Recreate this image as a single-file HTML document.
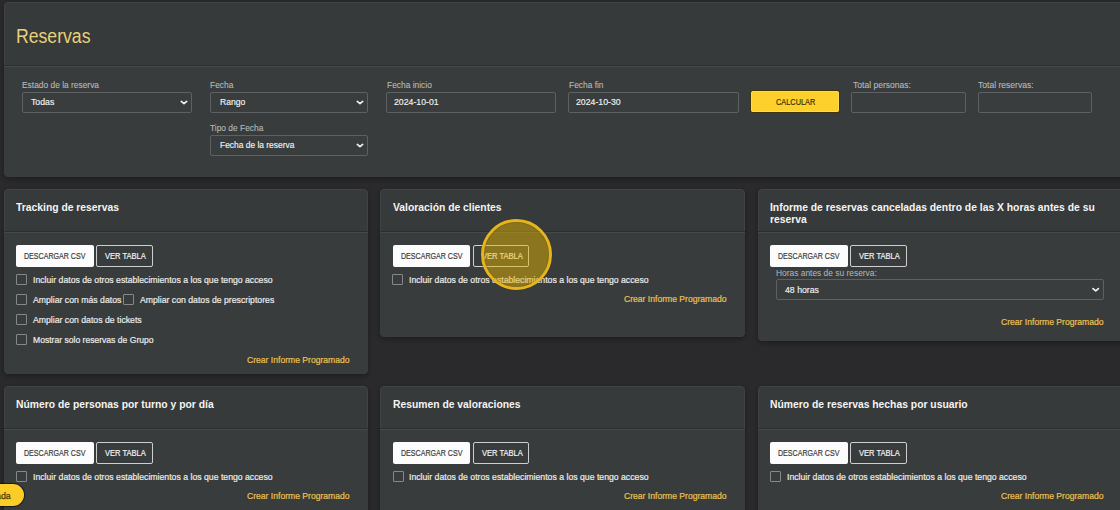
<!DOCTYPE html>
<html><head><meta charset="utf-8">
<style>
*{box-sizing:border-box;margin:0;padding:0}
html,body{width:1120px;height:510px;overflow:hidden;background:#2a2a2c;font-family:"Liberation Sans",sans-serif;position:relative}
.abs{position:absolute}
.t{position:absolute;white-space:nowrap;line-height:1;transform-origin:0 0}
</style></head><body>
<div class="abs" style="left:4px;top:2px;width:1130px;height:174.7px;background:#363a3b;border-radius:4.5px;box-shadow:0 2px 5px rgba(0,0,0,.32), inset 0 0 0 1px rgba(255,255,255,.05)"></div>
<div class="abs" style="left:4px;top:65px;width:1130px;height:1px;background:#2c2f30"></div>
<div class="abs" style="left:4px;top:66px;width:1130px;height:1px;background:#45494a"></div>
<div class="abs" style="left:4px;top:67px;width:1130px;height:109.7px;background:#393c3d;border-radius:0 0 4.5px 4.5px"></div>
<div class="t" style="left:15.8px;top:27.2px;font-size:19.6px;color:#e8d07a;font-weight:normal;transform:scaleX(0.9);">Reservas</div>
<div class="t" style="left:22px;top:81px;font-size:9px;color:#b6b9ba;font-weight:normal;transform:scaleX(0.933);-webkit-text-stroke:0.1px #b6b9ba">Estado de la reserva</div>
<div class="abs" style="left:22px;top:92px;width:170px;height:21px;border:1px solid #5d6163;border-radius:2px;background:#393d3e"></div>
<div class="t" style="left:31px;top:98px;font-size:9px;color:#f2f2f2;font-weight:normal;transform:scaleX(0.97);-webkit-text-stroke:0.15px #f2f2f2">Todas</div>
<div class="t" style="left:210px;top:81px;font-size:9px;color:#b6b9ba;font-weight:normal;transform:scaleX(0.933);-webkit-text-stroke:0.1px #b6b9ba">Fecha</div>
<div class="abs" style="left:210px;top:92px;width:158px;height:21px;border:1px solid #5d6163;border-radius:2px;background:#393d3e"></div>
<div class="t" style="left:219.5px;top:98px;font-size:9px;color:#f2f2f2;font-weight:normal;transform:scaleX(0.95);-webkit-text-stroke:0.15px #f2f2f2">Rango</div>
<div class="t" style="left:210px;top:124px;font-size:9px;color:#b6b9ba;font-weight:normal;transform:scaleX(0.933);-webkit-text-stroke:0.1px #b6b9ba">Tipo de Fecha</div>
<div class="abs" style="left:210px;top:135px;width:158px;height:21px;border:1px solid #5d6163;border-radius:2px;background:#393d3e"></div>
<div class="t" style="left:219.5px;top:141px;font-size:9px;color:#f2f2f2;font-weight:normal;transform:scaleX(0.935);-webkit-text-stroke:0.15px #f2f2f2">Fecha de la reserva</div>
<div class="t" style="left:386.5px;top:81px;font-size:9px;color:#b6b9ba;font-weight:normal;transform:scaleX(0.933);-webkit-text-stroke:0.1px #b6b9ba">Fecha inicio</div>
<div class="abs" style="left:386.3px;top:92.2px;width:170px;height:20.4px;border:1px solid #5d6163;border-radius:2px;background:#393d3e"></div>
<div class="t" style="left:393.7px;top:98px;font-size:9px;color:#f2f2f2;font-weight:normal;transform:scaleX(0.97);-webkit-text-stroke:0.15px #f2f2f2">2024-10-01</div>
<div class="t" style="left:569px;top:81px;font-size:9px;color:#b6b9ba;font-weight:normal;transform:scaleX(0.933);-webkit-text-stroke:0.1px #b6b9ba">Fecha fin</div>
<div class="abs" style="left:568.4px;top:92.2px;width:170.5px;height:20.4px;border:1px solid #5d6163;border-radius:2px;background:#393d3e"></div>
<div class="t" style="left:575.7px;top:98px;font-size:9px;color:#f2f2f2;font-weight:normal;transform:scaleX(0.97);-webkit-text-stroke:0.15px #f2f2f2">2024-10-30</div>
<div class="abs" style="left:751.3px;top:91.3px;width:87.7px;height:21px;background:#fdd02c;border-radius:2.5px;box-shadow:0 0 0 1px #3f3508, inset 0 0 0 1px #fddb55"></div>
<div class="t" style="left:775.7px;top:98px;font-size:9px;color:#3b3006;font-weight:normal;transform:scaleX(0.8184835665473478);-webkit-text-stroke:0.2px #3b3006">CALCULAR</div>
<div class="t" style="left:852.5px;top:81px;font-size:9px;color:#b6b9ba;font-weight:normal;transform:scaleX(0.95);-webkit-text-stroke:0.1px #b6b9ba">Total personas:</div>
<div class="abs" style="left:851px;top:92.2px;width:115px;height:20.6px;border:1px solid #5d6163;border-radius:2px;background:#393d3e"></div>
<div class="t" style="left:978px;top:81px;font-size:9px;color:#b6b9ba;font-weight:normal;transform:scaleX(0.95);-webkit-text-stroke:0.1px #b6b9ba">Total reservas:</div>
<div class="abs" style="left:977.5px;top:92.2px;width:114px;height:20.6px;border:1px solid #5d6163;border-radius:2px;background:#393d3e"></div>
<div class="abs" style="left:4px;top:189px;width:364px;height:184.5px;background:#363a3b;border-radius:4.5px;box-shadow:0 2px 5px rgba(0,0,0,.32), inset 0 0 0 1px rgba(255,255,255,.05)"></div>
<div class="abs" style="left:4px;top:231px;width:364px;height:1px;background:#2c2f30"></div>
<div class="abs" style="left:4px;top:232px;width:364px;height:1px;background:#45494a"></div>
<div class="abs" style="left:4px;top:233px;width:364px;height:140.5px;background:#393c3d;border-radius:0 0 4.5px 4.5px"></div>
<div class="abs" style="left:380.4px;top:189px;width:364.5px;height:147.5px;background:#363a3b;border-radius:4.5px;box-shadow:0 2px 5px rgba(0,0,0,.32), inset 0 0 0 1px rgba(255,255,255,.05)"></div>
<div class="abs" style="left:380.4px;top:231px;width:364.5px;height:1px;background:#2c2f30"></div>
<div class="abs" style="left:380.4px;top:232px;width:364.5px;height:1px;background:#45494a"></div>
<div class="abs" style="left:380.4px;top:233px;width:364.5px;height:103.5px;background:#393c3d;border-radius:0 0 4.5px 4.5px"></div>
<div class="abs" style="left:757.5px;top:189px;width:380px;height:151.6px;background:#363a3b;border-radius:4.5px;box-shadow:0 2px 5px rgba(0,0,0,.32), inset 0 0 0 1px rgba(255,255,255,.05)"></div>
<div class="abs" style="left:757.5px;top:231px;width:380px;height:1px;background:#2c2f30"></div>
<div class="abs" style="left:757.5px;top:232px;width:380px;height:1px;background:#45494a"></div>
<div class="abs" style="left:757.5px;top:233px;width:380px;height:107.6px;background:#393c3d;border-radius:0 0 4.5px 4.5px"></div>
<div class="abs" style="left:4px;top:386.4px;width:364px;height:140px;background:#363a3b;border-radius:4.5px;box-shadow:0 2px 5px rgba(0,0,0,.32), inset 0 0 0 1px rgba(255,255,255,.05)"></div>
<div class="abs" style="left:4px;top:428.4px;width:364px;height:1px;background:#2c2f30"></div>
<div class="abs" style="left:4px;top:429.4px;width:364px;height:1px;background:#45494a"></div>
<div class="abs" style="left:4px;top:430.4px;width:364px;height:96px;background:#393c3d;border-radius:0 0 4.5px 4.5px"></div>
<div class="abs" style="left:380.4px;top:386.4px;width:364.5px;height:140px;background:#363a3b;border-radius:4.5px;box-shadow:0 2px 5px rgba(0,0,0,.32), inset 0 0 0 1px rgba(255,255,255,.05)"></div>
<div class="abs" style="left:380.4px;top:428.4px;width:364.5px;height:1px;background:#2c2f30"></div>
<div class="abs" style="left:380.4px;top:429.4px;width:364.5px;height:1px;background:#45494a"></div>
<div class="abs" style="left:380.4px;top:430.4px;width:364.5px;height:96px;background:#393c3d;border-radius:0 0 4.5px 4.5px"></div>
<div class="abs" style="left:757.5px;top:386.4px;width:380px;height:140px;background:#363a3b;border-radius:4.5px;box-shadow:0 2px 5px rgba(0,0,0,.32), inset 0 0 0 1px rgba(255,255,255,.05)"></div>
<div class="abs" style="left:757.5px;top:428.4px;width:380px;height:1px;background:#2c2f30"></div>
<div class="abs" style="left:757.5px;top:429.4px;width:380px;height:1px;background:#45494a"></div>
<div class="abs" style="left:757.5px;top:430.4px;width:380px;height:96px;background:#393c3d;border-radius:0 0 4.5px 4.5px"></div>
<div class="t" style="left:16px;top:202px;font-size:11px;color:#f4f4f4;font-weight:bold;transform:scaleX(0.94);">Tracking de reservas</div>
<div class="abs" style="left:16px;top:245px;width:77.6px;height:21.7px;background:#fcfcfc;border-radius:2px"></div>
<div class="t" style="left:24.4px;top:252px;font-size:9px;color:#3c3c3c;font-weight:normal;transform:scaleX(0.7869903068172714);-webkit-text-stroke:0.2px #3c3c3c">DESCARGAR CSV</div>
<div class="abs" style="left:96.2px;top:245px;width:56.5px;height:21.7px;border:1px solid #cfcfcf;border-radius:2px"></div>
<div class="t" style="left:105px;top:252px;font-size:9px;color:#f4f4f4;font-weight:normal;transform:scaleX(0.837997432605905);-webkit-text-stroke:0.2px #f4f4f4">VER TABLA</div>
<div class="abs" style="left:16.2px;top:274.3px;width:11px;height:11px;border:1px solid #85898a;border-radius:1px"></div>
<div class="t" style="left:32.6px;top:275.4px;font-size:9.4px;color:#ececec;font-weight:normal;transform:scaleX(0.9268085106382978);-webkit-text-stroke:0.2px #ececec">Incluir datos de otros establecimientos a los que tengo acceso</div>
<div class="abs" style="left:16.2px;top:294.2px;width:11px;height:11px;border:1px solid #85898a;border-radius:1px"></div>
<div class="t" style="left:32.6px;top:295.4px;font-size:9.4px;color:#ececec;font-weight:normal;transform:scaleX(0.9268085106382978);-webkit-text-stroke:0.2px #ececec">Ampliar con más datos</div>
<div class="abs" style="left:123.2px;top:294.2px;width:11px;height:11px;border:1px solid #85898a;border-radius:1px"></div>
<div class="t" style="left:139.7px;top:295.4px;font-size:9.4px;color:#ececec;font-weight:normal;transform:scaleX(0.9268085106382978);-webkit-text-stroke:0.2px #ececec">Ampliar con datos de prescriptores</div>
<div class="abs" style="left:16.2px;top:314.2px;width:11px;height:11px;border:1px solid #85898a;border-radius:1px"></div>
<div class="t" style="left:32.6px;top:315.4px;font-size:9.4px;color:#ececec;font-weight:normal;transform:scaleX(0.9268085106382978);-webkit-text-stroke:0.2px #ececec">Ampliar con datos de tickets</div>
<div class="abs" style="left:16.2px;top:334.2px;width:11px;height:11px;border:1px solid #85898a;border-radius:1px"></div>
<div class="t" style="left:32.6px;top:335.4px;font-size:9.4px;color:#ececec;font-weight:normal;transform:scaleX(0.9143617021276594);-webkit-text-stroke:0.2px #ececec">Mostrar solo reservas de Grupo</div>
<div class="t" style="left:247.41px;top:356px;font-size:9px;color:#ecc14f;font-weight:normal;transform:scaleX(0.954);-webkit-text-stroke:0.2px #ecc14f">Crear Informe Programado</div>
<div class="t" style="left:392.5px;top:202px;font-size:11px;color:#f4f4f4;font-weight:bold;transform:scaleX(0.94);">Valoración de clientes</div>
<div class="abs" style="left:392.5px;top:245px;width:77.6px;height:21.7px;background:#fcfcfc;border-radius:2px"></div>
<div class="t" style="left:400.9px;top:252px;font-size:9px;color:#3c3c3c;font-weight:normal;transform:scaleX(0.7869903068172714);-webkit-text-stroke:0.2px #3c3c3c">DESCARGAR CSV</div>
<div class="abs" style="left:472.7px;top:245px;width:56.5px;height:21.7px;border:1px solid #cfcfcf;border-radius:2px"></div>
<div class="t" style="left:481.5px;top:252px;font-size:9px;color:#f4f4f4;font-weight:normal;transform:scaleX(0.837997432605905);-webkit-text-stroke:0.2px #f4f4f4">VER TABLA</div>
<div class="abs" style="left:392.2px;top:274.3px;width:11px;height:11px;border:1px solid #85898a;border-radius:1px"></div>
<div class="t" style="left:409.3px;top:275.4px;font-size:9.4px;color:#ececec;font-weight:normal;transform:scaleX(0.9268085106382978);-webkit-text-stroke:0.2px #ececec">Incluir datos de otros establecimientos a los que tengo acceso</div>
<div class="t" style="left:624.41px;top:295px;font-size:9px;color:#ecc14f;font-weight:normal;transform:scaleX(0.954);-webkit-text-stroke:0.2px #ecc14f">Crear Informe Programado</div>
<div class="t" style="left:770px;top:202px;font-size:11px;color:#f4f4f4;font-weight:bold;transform:scaleX(0.94);">Informe de reservas canceladas dentro de las X horas antes de su</div>
<div class="t" style="left:770px;top:214px;font-size:11px;color:#f4f4f4;font-weight:bold;transform:scaleX(0.94);">reserva</div>
<div class="abs" style="left:770px;top:245px;width:77.6px;height:21.7px;background:#fcfcfc;border-radius:2px"></div>
<div class="t" style="left:778.4px;top:252px;font-size:9px;color:#3c3c3c;font-weight:normal;transform:scaleX(0.7869903068172714);-webkit-text-stroke:0.2px #3c3c3c">DESCARGAR CSV</div>
<div class="abs" style="left:850.2px;top:245px;width:56.5px;height:21.7px;border:1px solid #cfcfcf;border-radius:2px"></div>
<div class="t" style="left:859px;top:252px;font-size:9px;color:#f4f4f4;font-weight:normal;transform:scaleX(0.837997432605905);-webkit-text-stroke:0.2px #f4f4f4">VER TABLA</div>
<div class="t" style="left:776px;top:268.5px;font-size:9px;color:#b6b9ba;font-weight:normal;transform:scaleX(0.933);">Horas antes de su reserva:</div>
<div class="abs" style="left:776px;top:279.2px;width:327.5px;height:21.2px;border:1px solid #5d6163;border-radius:2px;background:#393d3e"></div>
<div class="t" style="left:785px;top:286px;font-size:9px;color:#f2f2f2;font-weight:normal;transform:scaleX(0.97);-webkit-text-stroke:0.15px #f2f2f2">48 horas</div>
<div class="t" style="left:1000.61px;top:318px;font-size:9px;color:#ecc14f;font-weight:normal;transform:scaleX(0.954);-webkit-text-stroke:0.2px #ecc14f">Crear Informe Programado</div>
<div class="t" style="left:16px;top:399px;font-size:11px;color:#f4f4f4;font-weight:bold;transform:scaleX(0.94);">Número de personas por turno y por día</div>
<div class="abs" style="left:16px;top:442px;width:77.6px;height:21.7px;background:#fcfcfc;border-radius:2px"></div>
<div class="t" style="left:24.4px;top:449px;font-size:9px;color:#3c3c3c;font-weight:normal;transform:scaleX(0.7869903068172714);-webkit-text-stroke:0.2px #3c3c3c">DESCARGAR CSV</div>
<div class="abs" style="left:96.2px;top:442px;width:56.5px;height:21.7px;border:1px solid #cfcfcf;border-radius:2px"></div>
<div class="t" style="left:105px;top:449px;font-size:9px;color:#f4f4f4;font-weight:normal;transform:scaleX(0.837997432605905);-webkit-text-stroke:0.2px #f4f4f4">VER TABLA</div>
<div class="abs" style="left:16.2px;top:471px;width:11px;height:11px;border:1px solid #85898a;border-radius:1px"></div>
<div class="t" style="left:32.6px;top:471.9px;font-size:9.4px;color:#ececec;font-weight:normal;transform:scaleX(0.9268085106382978);-webkit-text-stroke:0.2px #ececec">Incluir datos de otros establecimientos a los que tengo acceso</div>
<div class="t" style="left:247.41px;top:492px;font-size:9px;color:#ecc14f;font-weight:normal;transform:scaleX(0.954);-webkit-text-stroke:0.2px #ecc14f">Crear Informe Programado</div>
<div class="t" style="left:392.5px;top:399px;font-size:11px;color:#f4f4f4;font-weight:bold;transform:scaleX(0.94);">Resumen de valoraciones</div>
<div class="abs" style="left:392.5px;top:442px;width:77.6px;height:21.7px;background:#fcfcfc;border-radius:2px"></div>
<div class="t" style="left:400.9px;top:449px;font-size:9px;color:#3c3c3c;font-weight:normal;transform:scaleX(0.7869903068172714);-webkit-text-stroke:0.2px #3c3c3c">DESCARGAR CSV</div>
<div class="abs" style="left:472.7px;top:442px;width:56.5px;height:21.7px;border:1px solid #cfcfcf;border-radius:2px"></div>
<div class="t" style="left:481.5px;top:449px;font-size:9px;color:#f4f4f4;font-weight:normal;transform:scaleX(0.837997432605905);-webkit-text-stroke:0.2px #f4f4f4">VER TABLA</div>
<div class="abs" style="left:392.7px;top:471px;width:11px;height:11px;border:1px solid #85898a;border-radius:1px"></div>
<div class="t" style="left:409.1px;top:471.9px;font-size:9.4px;color:#ececec;font-weight:normal;transform:scaleX(0.9268085106382978);-webkit-text-stroke:0.2px #ececec">Incluir datos de otros establecimientos a los que tengo acceso</div>
<div class="t" style="left:624.41px;top:492px;font-size:9px;color:#ecc14f;font-weight:normal;transform:scaleX(0.954);-webkit-text-stroke:0.2px #ecc14f">Crear Informe Programado</div>
<div class="t" style="left:770px;top:399px;font-size:11px;color:#f4f4f4;font-weight:bold;transform:scaleX(0.94);">Número de reservas hechas por usuario</div>
<div class="abs" style="left:770px;top:442px;width:77.6px;height:21.7px;background:#fcfcfc;border-radius:2px"></div>
<div class="t" style="left:778.4px;top:449px;font-size:9px;color:#3c3c3c;font-weight:normal;transform:scaleX(0.7869903068172714);-webkit-text-stroke:0.2px #3c3c3c">DESCARGAR CSV</div>
<div class="abs" style="left:850.2px;top:442px;width:56.5px;height:21.7px;border:1px solid #cfcfcf;border-radius:2px"></div>
<div class="t" style="left:859px;top:449px;font-size:9px;color:#f4f4f4;font-weight:normal;transform:scaleX(0.837997432605905);-webkit-text-stroke:0.2px #f4f4f4">VER TABLA</div>
<div class="abs" style="left:770.2px;top:471px;width:11px;height:11px;border:1px solid #85898a;border-radius:1px"></div>
<div class="t" style="left:786.6px;top:471.9px;font-size:9.4px;color:#ececec;font-weight:normal;transform:scaleX(0.9268085106382978);-webkit-text-stroke:0.2px #ececec">Incluir datos de otros establecimientos a los que tengo acceso</div>
<div class="t" style="left:1000.61px;top:492px;font-size:9px;color:#ecc14f;font-weight:normal;transform:scaleX(0.954);-webkit-text-stroke:0.2px #ecc14f">Crear Informe Programado</div>
<svg class="abs" style="left:0;top:0" width="1120" height="510"><g fill="none" stroke="#f4f4f4" stroke-width="1.6" stroke-linecap="round" stroke-linejoin="round">
<path d="M181.3 101.4 L184 103.7 L186.7 101.4"/>
<path d="M357.3 101.4 L360 103.7 L362.7 101.4"/>
<path d="M357.3 144.4 L360 146.7 L362.7 144.4"/>
<path d="M1093 288.6 L1095.7 290.9 L1098.4 288.6"/>
</g></svg>
<div class="abs" style="left:481px;top:219.2px;width:71px;height:71px;border-radius:50%;background:rgba(230,180,0,0.48);border:3.3px solid #e6b41c;box-shadow:0 0 1px rgba(40,30,0,.7), inset 0 0 1px rgba(40,30,0,.7)"></div>
<div class="abs" style="left:-62px;top:483.6px;width:86px;height:22.6px;background:#fccd26;border-radius:11.3px;box-shadow:0 0 1px 1px rgba(0,0,0,.55)"></div>
<div class="t" style="left:-4.5px;top:490.5px;font-size:9.5px;color:#4a3a04;font-weight:normal;transform:scaleX(0.93);-webkit-text-stroke:0.25px #4a3a04">ada</div>
</body></html>
